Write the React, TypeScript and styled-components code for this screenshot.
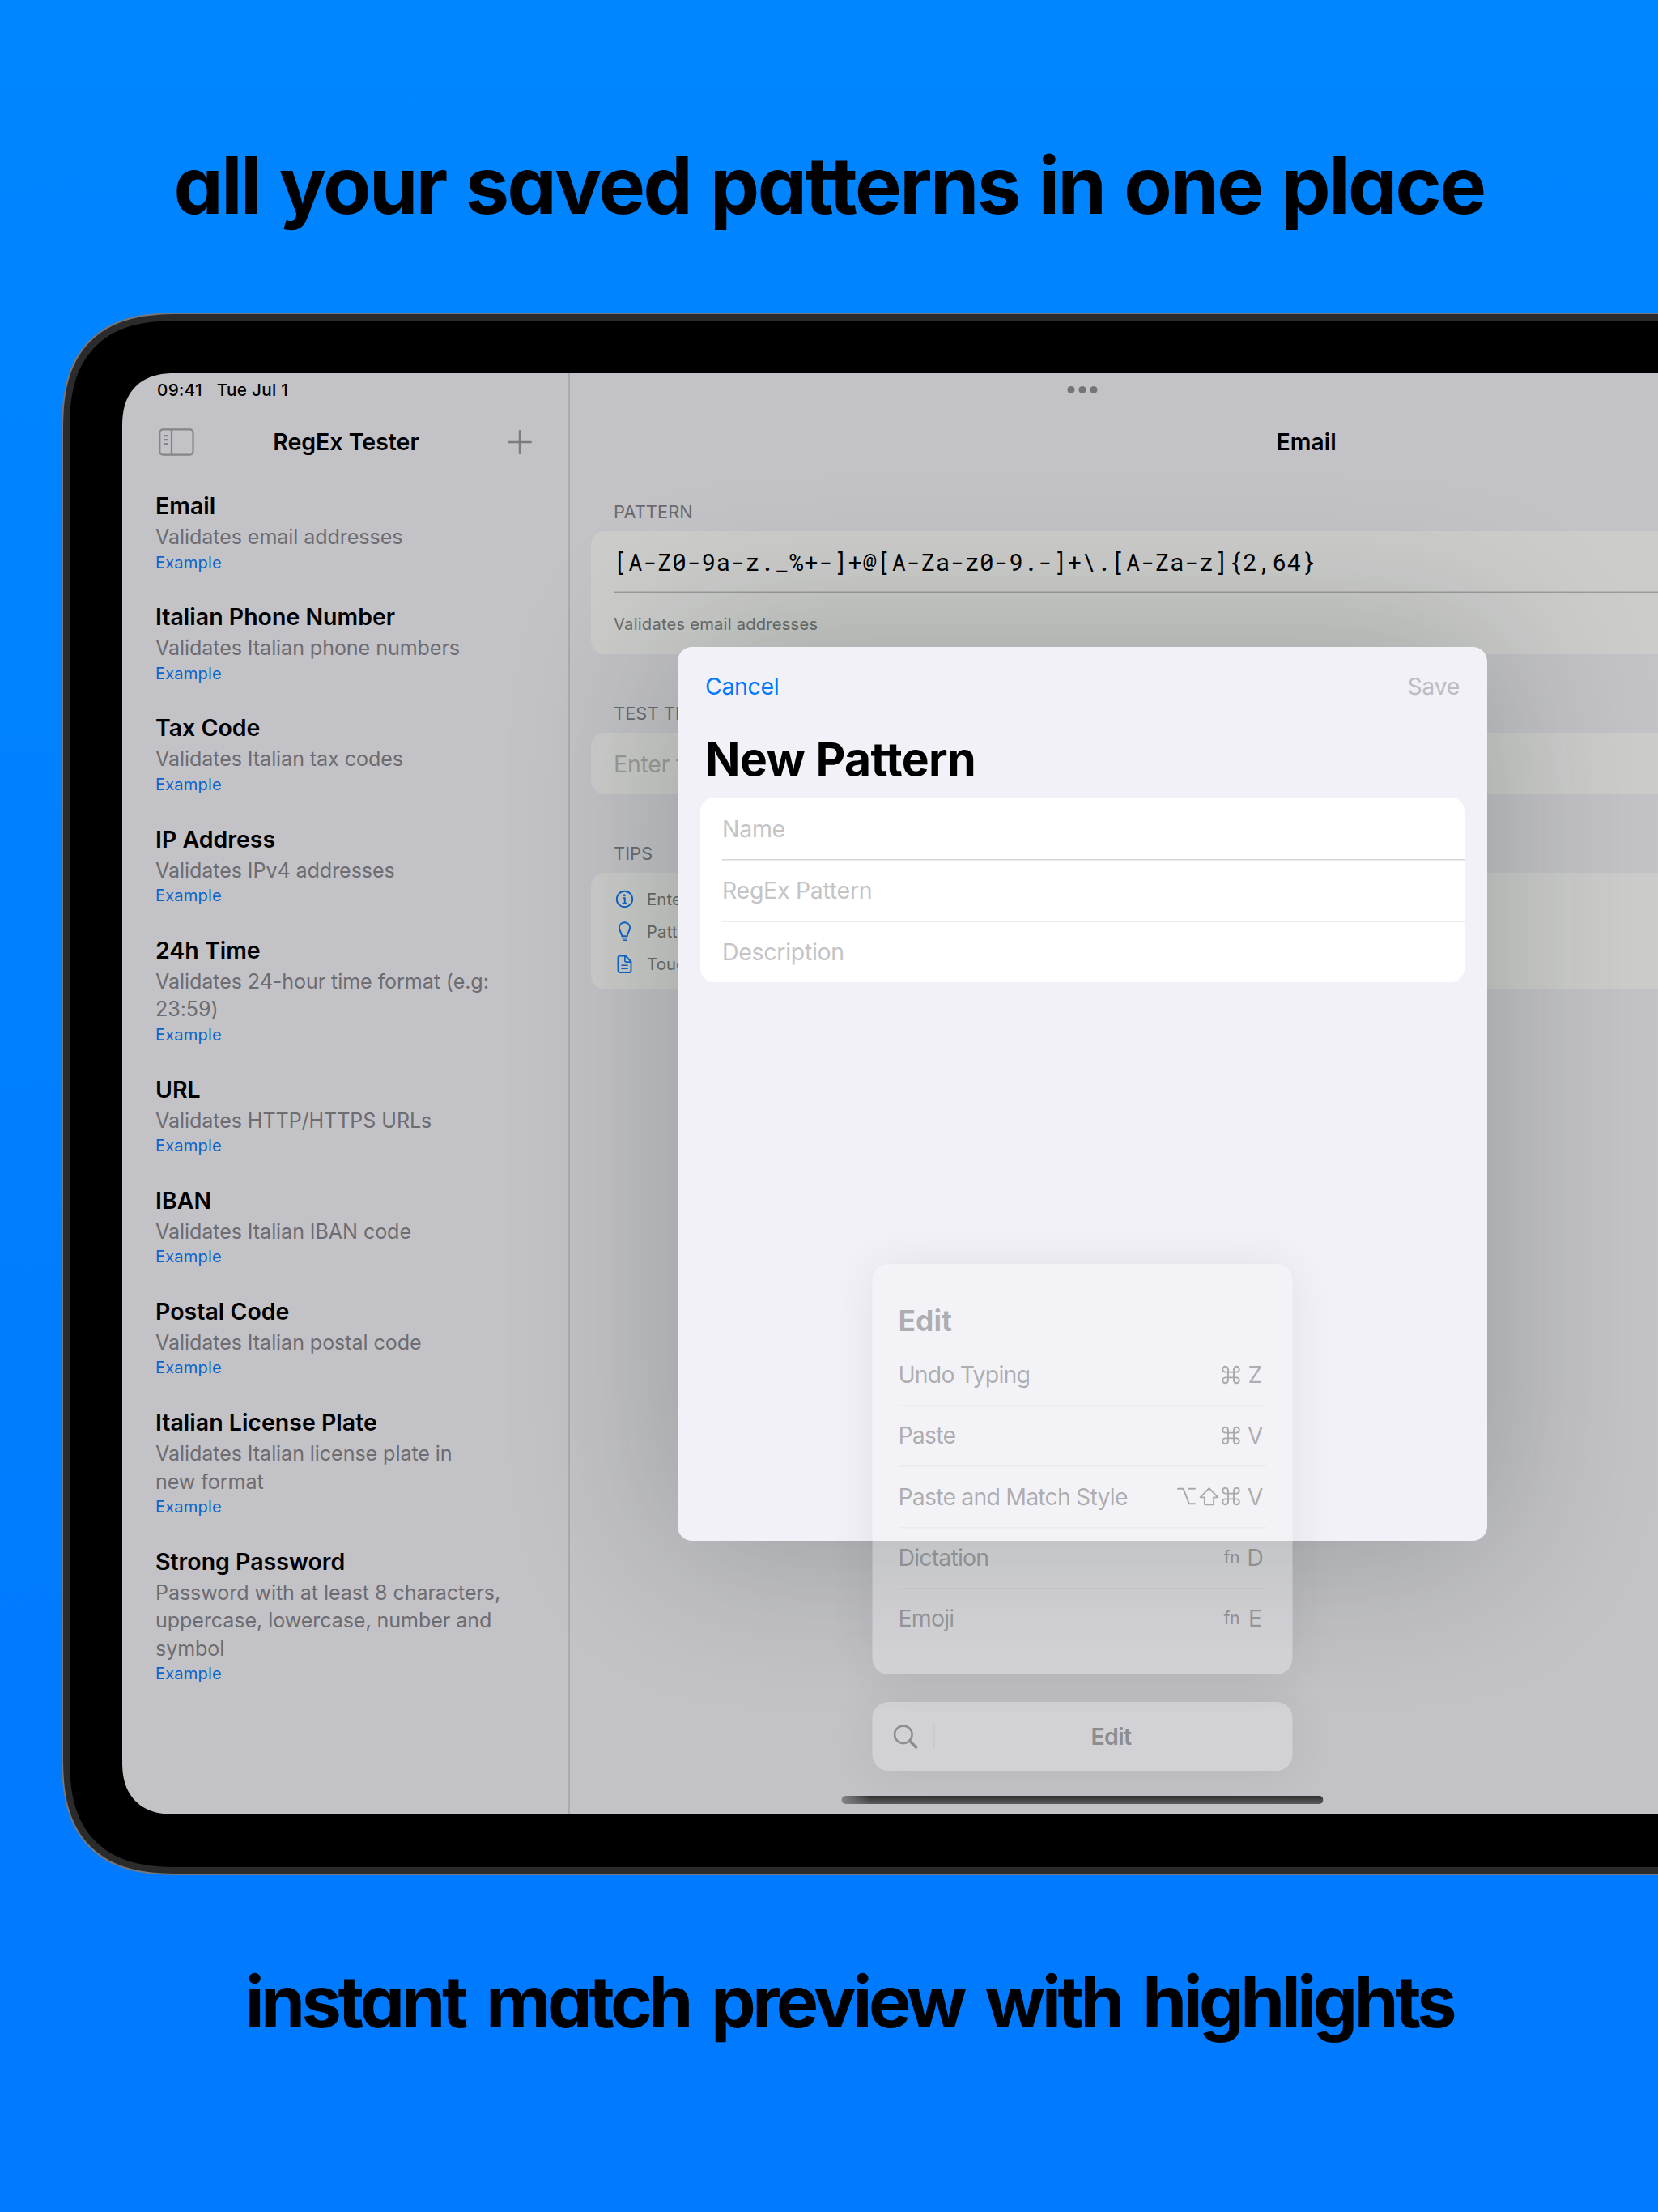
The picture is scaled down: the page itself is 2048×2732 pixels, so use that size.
import React from 'react';
import styled, { createGlobalStyle, css } from 'styled-components';

const GlobalStyle = createGlobalStyle`
  *, *::before, *::after {
    box-sizing: border-box;
  }

  body {
    margin: 0;
    overflow: hidden;
    font-family: 'Inter', sans-serif;
    font-feature-settings: 'calt' 0;
    color: #000;
  }
`;

const Page = styled.main`
  display: flex;
  flex-direction: column;
  width: 2048px;
  height: 2732px;
  overflow: hidden;
  background: linear-gradient(#0086ff, #007aff 80%);
`;

const Caption = styled.h1<{ $bottom?: boolean }>`
  flex: none;
  margin: 0;
  height: 386px;
  padding-top: 169px;
  font-size: 97px;
  font-weight: 700;
  line-height: 120px;
  letter-spacing: -2.5px;
  word-spacing: 3.5px;
  text-align: center;
  white-space: nowrap;
  font-feature-settings: 'cv11';

  ${({ $bottom }) =>
    $bottom &&
    css`
      padding: 96px 0 0 50px;
      font-size: 88px;
      letter-spacing: -4.4px;
      word-spacing: 10px;
    `}
`;

const Device = styled.div`
  flex: none;
  align-self: flex-start;
  margin-left: 76px;
  padding: 8px;
  border: 2px solid #75777b;
  border-radius: 118px;
  background: #2b2b2b;

  @supports (corner-shape: superellipse(1.4)) {
    border-radius: 148px;
    corner-shape: superellipse(1.4);
  }
`;

const Bezel = styled.div`
  padding: 65px;
  border-radius: 108px;
  background: #000;

  @supports (corner-shape: superellipse(1.4)) {
    border-radius: 138px;
    corner-shape: superellipse(1.4);
  }
`;

const Screen = styled.div`
  position: relative;
  display: flex;
  width: 2372px;
  height: 1780px;
  border-radius: 56px;
  overflow: hidden;
  background: #c3c2c7;

  @supports (corner-shape: superellipse(1.25)) {
    border-radius: 65px;
    corner-shape: superellipse(1.25);
  }
`;

const Sidebar = styled.aside`
  flex: none;
  width: 553px;
  border-right: 2px solid #abaaaf;
`;

const StatusBar = styled.div`
  display: flex;
  align-items: center;
  gap: 18px;
  height: 41px;
  padding-left: 43px;
  font-size: 20.7px;
  font-weight: 500;
  letter-spacing: 0.3px;
`;

const NavBar = styled.div`
  display: flex;
  align-items: center;
  justify-content: space-between;
  height: 87px;
  padding: 0 45px;
`;

const NavTitle = styled.h2<{ $offset?: number }>`
  margin: 0 auto;
  padding-right: ${(props) => props.$offset ?? 0}px;
  font-size: 28.5px;
  font-weight: 600;
`;

const PatternList = styled.ul`
  display: flex;
  flex-direction: column;
  gap: 34px;
  margin: 0;
  padding: 17px 60px 0 41px;
  list-style: none;
`;

const PatternName = styled.div`
  margin-bottom: 2px;
  font-size: 28.5px;
  font-weight: 600;
  line-height: 38px;
`;

const PatternText = styled.div`
  font-size: 25.1px;
  line-height: 34.5px;
  letter-spacing: -0.08px;
  color: #6c6c71;
  white-space: pre-line;
`;

const PatternLink = styled.div`
  margin-top: 1px;
  font-size: 20.1px;
  line-height: 27.7px;
  letter-spacing: 0.15px;
  color: #0c64cb;
`;

const Detail = styled.section`
  flex: 1;
`;

const SectionLabel = styled.h3`
  margin: 0 0 9px;
  padding-left: 28px;
  font-size: 21.8px;
  font-weight: 400;
  line-height: 30px;
  letter-spacing: 0.1px;
  color: #6a6a6e;
`;

const Group = styled.div`
  margin: 28px 26px 58px;
`;

const Card = styled.div<{ $list?: boolean }>`
  padding: ${(props) => (props.$list ? '12px 0 11px 28px' : '0 0 0 28px')};
  border-radius: 17px;
  background: #cccccb;
`;

const CardRow = styled.div<{ $divided?: boolean }>`
  display: flex;
  align-items: center;
  height: 76px;
  box-shadow: ${(props) => props.$divided && 'inset 0 -1.5px #9b9c9a'};
`;

const RegexCode = styled.code`
  margin-bottom: 2px;
  font-family: 'Roboto Mono', 'DejaVu Sans Mono', monospace;
  font-size: 29.3px;
  letter-spacing: 0.5px;
`;

const Note = styled.span`
  font-size: 20.2px;
  letter-spacing: 0.2px;
  color: #6a6b6a;
`;

const Placeholder = styled.span`
  font-size: 28.5px;
  letter-spacing: -0.25px;
  color: #9b9c9b;
`;

const TipRow = styled.div`
  display: flex;
  align-items: center;
  gap: 14px;
  height: 40.3px;
`;

const DetailBody = styled.div`
  ${Group} + ${Group} {
    margin-top: 0;
  }
`;

const WindowDots = styled.div`
  position: absolute;
  top: 16px;
  left: 50%;
  display: flex;
  gap: 5px;
  transform: translateX(-50%);

  span {
    width: 9px;
    height: 9px;
    border-radius: 50%;
    background: #747478;
  }
`;

const Backdrop = styled.div`
  position: absolute;
  inset: 0;
  display: flex;
  align-items: center;
  justify-content: center;
`;

const Modal = styled.div`
  width: 1000px;
  height: 1104px;
  border-radius: 18px;
  background: #f2f1f7;
  box-shadow: 0 0 200px rgba(18, 46, 26, 0.27);
`;

const ModalBar = styled.div`
  display: flex;
  align-items: center;
  justify-content: space-between;
  height: 97px;
  padding: 0 34px;
`;

const ModalButton = styled.button<{ $muted?: boolean }>`
  padding: 0;
  border: none;
  background: none;
  font: inherit;
  font-size: 28.5px;
  letter-spacing: -0.35px;
  color: ${(props) => (props.$muted ? '#bdbdc1' : '#007aff')};
`;

const ModalTitle = styled.h2`
  margin: 7px 32px 12px 34px;
  font-size: 57px;
  font-weight: 700;
  line-height: 70px;
  letter-spacing: -0.55px;
`;

const Form = styled.div`
  margin: 0 28px;
  padding-left: 27px;
  border-radius: 17px;
  background: #fff;
`;

const Field = styled.div`
  display: flex;
  align-items: center;
  height: 76px;
  font-size: 28.5px;
  letter-spacing: -0.3px;
  color: #c4c4c6;

  & + & {
    box-shadow: inset 0 1.5px #d6d6d8;
  }
`;

const MenuStack = styled.div`
  position: absolute;
  bottom: 54px;
  left: 50%;
  display: flex;
  flex-direction: column;
  gap: 34px;
  width: 519px;
  transform: translateX(-50%);
`;

const MenuPanel = styled.div`
  padding: 49px 32px 32px;
  border-radius: 20px;
  background: rgba(246, 245, 250, 0.33);
  box-shadow: 0 0 60px rgba(0, 0, 0, 0.07);
`;

const MenuTitle = styled.div`
  margin-bottom: 6px;
  font-size: 35.5px;
  font-weight: 700;
  line-height: 44px;
  color: rgba(0, 0, 0, 0.28);
`;

const MenuRow = styled.div`
  display: flex;
  align-items: center;
  justify-content: space-between;
  height: 75.2px;
  font-size: 28.5px;
  letter-spacing: -0.85px;
  color: rgba(0, 0, 0, 0.3);

  & + & {
    box-shadow: inset 0 1.5px rgba(0, 0, 0, 0.03);
  }
`;

const Shortcut = styled.div`
  display: flex;
  align-items: center;
  gap: 3.5px;
  padding-right: 3px;
`;

const Key = styled.span`
  width: 22px;
  margin-left: 3.5px;
  text-align: center;
  letter-spacing: 0;
`;

const FnKey = styled.span`
  width: 21px;
  font-size: 21px;
  font-weight: 500;
  letter-spacing: -0.5px;
`;

const SearchPanel = styled.div`
  display: flex;
  align-items: center;
  height: 85px;
  padding: 0 6px 0 26px;
  border-radius: 20px;
  background: rgba(246, 245, 250, 0.3);
  box-shadow: 0 0 60px rgba(0, 0, 0, 0.07);
  color: #8d8d90;
`;

const SearchLabel = styled.div`
  flex: 1;
  margin-left: 20px;
  border-left: 1.5px solid #c3c2c6;
  font-size: 28.5px;
  font-weight: 600;
  line-height: 28px;
  letter-spacing: -0.6px;
  text-align: center;
`;

const HomeIndicator = styled.div`
  position: absolute;
  bottom: 13px;
  left: 50%;
  width: 595px;
  height: 10px;
  border-radius: 5px;
  background: linear-gradient(90deg, #848487, rgba(132, 132, 135, 0) 6%), linear-gradient(#2f2f30, #5c5c5e);
  transform: translateX(-50%);
`;

const SidebarIcon = () => (
  <svg width='44' height='34' viewBox='0 0 44 34' fill='none' stroke='#858588' strokeWidth='2.2'>
    <rect x='1.3' y='1.3' width='41.2' height='31.4' rx='4' />
    <path d='M16 1.3v31.4M6.2 9.2h5.6M6.2 14.2h5.6M6.2 19h5.6' />
  </svg>
);

const PlusIcon = () => (
  <svg width='30' height='30' viewBox='0 0 30 30' fill='none' stroke='#7c7c80' strokeWidth='2.5' strokeLinecap='round'>
    <path d='M15 1.3v27.4M1.3 15h27.4' />
  </svg>
);

const tipIcon = {
  width: 27,
  height: 27,
  viewBox: '0 0 27 27',
  fill: 'none',
  stroke: '#0c64cb',
  strokeWidth: 1.9,
};

const InfoIcon = () => (
  <svg {...tipIcon}>
    <circle cx='13.5' cy='13.5' r='9.7' />
    <circle cx='13.3' cy='8.9' r='1.4' fill='#0c64cb' stroke='none' />
    <path d='M11 12.3h2.8v6.3M10.6 18.7h6' />
  </svg>
);

const BulbIcon = () => (
  <svg {...tipIcon}>
    <path d='M10.3 19.2c0-3.6-3.4-6-3.4-10.4a6.6 6.6 0 0 1 13.2 0c0 4.4-3.4 6.8-3.4 10.4z' strokeLinejoin='round' />
    <path d='M10.3 21.8h6.4M11 24.2h5' strokeWidth='1.6' />
  </svg>
);

const DocIcon = () => (
  <svg {...tipIcon} strokeLinejoin='round'>
    <path d='M14.5 3.5H7.7a2.2 2.2 0 0 0-2.2 2.2v16.1a2.2 2.2 0 0 0 2.2 2.2h11.6a2.2 2.2 0 0 0 2.2-2.2V10.6z' />
    <path d='M13.8 3.8v5.6a1.7 1.7 0 0 0 1.7 1.7h5.7M9.4 15.3h8.2M9.4 19.3h8.2' strokeWidth='1.6' />
  </svg>
);

const keyIcon = {
  width: 24,
  height: 24,
  viewBox: '0 0 24 24',
  fill: 'none',
  stroke: 'currentColor',
  strokeWidth: 1.9,
};

const CommandIcon = () => (
  <svg {...keyIcon}>
    <path d='M8.5 5.2a3.4 3.4 0 1 0-3.4 3.4h13.8a3.4 3.4 0 1 0-3.4-3.4v13.6a3.4 3.4 0 1 0 3.4-3.4H5.1a3.4 3.4 0 1 0 3.4 3.4z' />
  </svg>
);

const ShiftIcon = () => (
  <svg {...keyIcon} strokeLinejoin='round'>
    <path d='M12 2.2 23 13.4h-5.4v8a1 1 0 0 1-1 1H7.4a1 1 0 0 1-1-1v-8H1z' />
  </svg>
);

const OptionIcon = () => (
  <svg {...keyIcon} strokeLinecap='round' strokeLinejoin='round'>
    <path d='M1.5 2.8h6.8l7 18.4h7.2M14.5 2.8h8' />
  </svg>
);

const SearchIcon = () => (
  <svg width='30' height='30' viewBox='0 0 30 30' fill='none' stroke='currentColor' strokeWidth='2.6'>
    <circle cx='12.3' cy='12.3' r='10.8' />
    <path d='m20 20 8 8' strokeWidth='3.4' strokeLinecap='round' />
  </svg>
);

const patterns = [
  { name: 'Email', text: 'Validates email addresses' },
  { name: 'Italian Phone Number', text: 'Validates Italian phone numbers' },
  { name: 'Tax Code', text: 'Validates Italian tax codes' },
  { name: 'IP Address', text: 'Validates IPv4 addresses' },
  { name: '24h Time', text: 'Validates 24-hour time format (e.g:\n23:59)' },
  { name: 'URL', text: 'Validates HTTP/HTTPS URLs' },
  { name: 'IBAN', text: 'Validates Italian IBAN code' },
  { name: 'Postal Code', text: 'Validates Italian postal code' },
  { name: 'Italian License Plate', text: 'Validates Italian license plate in\nnew format' },
  {
    name: 'Strong Password',
    text: 'Password with at least 8 characters,\nuppercase, lowercase, number and\nsymbol',
  },
];

const tips = [
  { icon: <InfoIcon />, text: 'Enter' },
  { icon: <BulbIcon />, text: 'Patte' },
  { icon: <DocIcon />, text: 'Touc' },
];

const menuItems = [
  { label: 'Undo Typing', modifiers: <CommandIcon />, shortcut: 'Z' },
  { label: 'Paste', modifiers: <CommandIcon />, shortcut: 'V' },
  {
    label: 'Paste and Match Style',
    modifiers: (
      <>
        <OptionIcon />
        <ShiftIcon />
        <CommandIcon />
      </>
    ),
    shortcut: 'V',
  },
  { label: 'Dictation', modifiers: <FnKey>fn</FnKey>, shortcut: 'D' },
  { label: 'Emoji', modifiers: <FnKey>fn</FnKey>, shortcut: 'E' },
];

const PatternSidebar = () => (
  <Sidebar>
    <StatusBar>
      <span>09:41</span>
      <span>Tue Jul 1</span>
    </StatusBar>
    <NavBar>
      <SidebarIcon />
      <NavTitle $offset={12}>RegEx Tester</NavTitle>
      <PlusIcon />
    </NavBar>
    <PatternList>
      {patterns.map((pattern) => (
        <li key={pattern.name}>
          <PatternName>{pattern.name}</PatternName>
          <PatternText>{pattern.text}</PatternText>
          <PatternLink>Example</PatternLink>
        </li>
      ))}
    </PatternList>
  </Sidebar>
);

const PatternDetail = () => (
  <Detail>
    <StatusBar />
    <NavBar>
      <NavTitle>Email</NavTitle>
    </NavBar>
    <DetailBody>
      <Group>
        <SectionLabel>PATTERN</SectionLabel>
        <Card>
          <CardRow $divided>
            <RegexCode>{'[A-Z0-9a-z._%+-]+@[A-Za-z0-9.-]+\\.[A-Za-z]{2,64}'}</RegexCode>
          </CardRow>
          <CardRow>
            <Note>Validates email addresses</Note>
          </CardRow>
        </Card>
      </Group>
      <Group>
        <SectionLabel>TEST TEXT</SectionLabel>
        <Card>
          <CardRow>
            <Placeholder>Enter t</Placeholder>
          </CardRow>
        </Card>
      </Group>
      <Group>
        <SectionLabel>TIPS</SectionLabel>
        <Card $list>
          {tips.map((tip) => (
            <TipRow key={tip.text}>
              {tip.icon}
              <Note>{tip.text}</Note>
            </TipRow>
          ))}
        </Card>
      </Group>
    </DetailBody>
  </Detail>
);

const NewPatternModal = () => (
  <Backdrop>
    <Modal>
      <ModalBar>
        <ModalButton>Cancel</ModalButton>
        <ModalButton $muted>Save</ModalButton>
      </ModalBar>
      <ModalTitle>New Pattern</ModalTitle>
      <Form>
        <Field>Name</Field>
        <Field>RegEx Pattern</Field>
        <Field>Description</Field>
      </Form>
    </Modal>
  </Backdrop>
);

const EditMenu = () => (
  <MenuStack>
    <MenuPanel>
      <MenuTitle>Edit</MenuTitle>
      {menuItems.map((item) => (
        <MenuRow key={item.label}>
          <span>{item.label}</span>
          <Shortcut>
            {item.modifiers}
            <Key>{item.shortcut}</Key>
          </Shortcut>
        </MenuRow>
      ))}
    </MenuPanel>
    <SearchPanel>
      <SearchIcon />
      <SearchLabel>Edit</SearchLabel>
    </SearchPanel>
  </MenuStack>
);

const App = () => {
  return (
    <>
      <GlobalStyle />
      <Page>
        <Caption>all your saved patterns in one place</Caption>
        <Device>
          <Bezel>
            <Screen>
              <PatternSidebar />
              <PatternDetail />
              <WindowDots>
                <span />
                <span />
                <span />
              </WindowDots>
              <NewPatternModal />
              <EditMenu />
              <HomeIndicator />
            </Screen>
          </Bezel>
        </Device>
        <Caption $bottom>instant match preview with highlights</Caption>
      </Page>
    </>
  );
};

export default App;
